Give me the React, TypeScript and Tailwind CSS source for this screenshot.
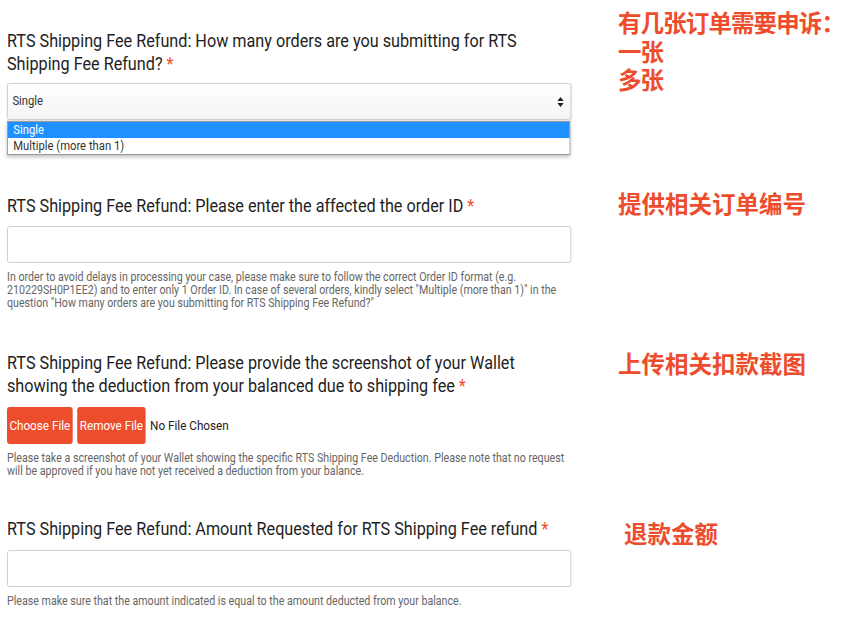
import React from "react";

function Star() {
  return <span className="text-[#ee4d2d]"> *</span>;
}

function Heading({ children, top }: { children: React.ReactNode; top: string }) {
  return (
    <div className={`${top} text-[18px] leading-[23px] text-[#1e1e1e]`}>
      {children}
      <Star />
    </div>
  );
}

function Help({ children, top }: { children: React.ReactNode; top: string }) {
  return <div className={`${top} text-[11.85px] leading-[13px] text-[#666]`}>{children}</div>;
}

function Note({ children, className }: { children: React.ReactNode; className: string }) {
  return (
    <div
      className={`${className} whitespace-nowrap text-[23.5px] leading-[28.5px] font-semibold text-[#ee4d2d] font-['Noto_Sans_CJK_SC',sans-serif]`}
    >
      {children}
    </div>
  );
}

export default function App() {
  return (
    <div className="w-[850px] h-[621px] overflow-hidden bg-white flex font-['Roboto',sans-serif]">
      {/* form, drawn in a narrow (condensed) face */}
      <div className="w-[618px] shrink-0 pl-[7px]">
        <div className="w-[627px] origin-left scale-x-[0.9]">
          <Heading top="pt-[29px]">
            RTS Shipping Fee Refund: How many orders are you submitting for RTS Shipping Fee Refund?
          </Heading>

          <div className="relative mt-[8px]">
            <div className="h-[37px] border border-[#ccc] rounded-[3px] bg-gradient-to-b from-white to-[#f4f4f4] shadow-[0_1px_2px_rgba(0,0,0,0.12)] flex items-center justify-between pl-[5px] pr-[7px]">
              <span className="text-[12.5px] text-[#333]">Single</span>
              <svg width="8" height="12" viewBox="0 0 8 12">
                <path d="M4 1 L7.5 5 L0.5 5 Z" fill="#222" />
                <path d="M4 11 L7.5 7 L0.5 7 Z" fill="#222" />
              </svg>
            </div>
            <div className="absolute left-0 right-[1px] top-[38px] bg-white border border-[#9a9a9a] shadow-[0_2px_4px_rgba(0,0,0,0.25)] text-[12.5px] leading-[16px]">
              <div className="bg-[#1e90ff] text-white pl-[6px]">Single</div>
              <div className="text-[#333] pl-[6px]">Multiple (more than 1)</div>
            </div>
          </div>

          <Heading top="mt-[74px]">RTS Shipping Fee Refund: Please enter the affected the order ID</Heading>
          <div className="mt-[9px] h-[37px] border border-[#ccc] rounded-[3px] bg-white" />
          <Help top="mt-[8px]">
            In order to avoid delays in processing your case, please make sure to follow the correct Order ID format (e.g.
            210229SH0P1EE2) and to enter only 1 Order ID. In case of several orders, kindly select "Multiple (more than 1)" in
            the question "How many orders are you submitting for RTS Shipping Fee Refund?"
          </Help>

          <Heading top="mt-[41px]">
            RTS Shipping Fee Refund: Please provide the screenshot of your Wallet showing the deduction from your balanced due
            to shipping fee
          </Heading>
          <div className="mt-[10px] flex items-center gap-[5px]">
            <button className="h-[37px] w-[73px] bg-[#ee4d2d] rounded-[3px] text-white text-[13px]">Choose File</button>
            <button className="h-[37px] w-[76px] bg-[#ee4d2d] rounded-[3px] text-white text-[13px]">Remove File</button>
            <span className="text-[13px] text-[#222]">No File Chosen</span>
          </div>
          <Help top="mt-[8px]">
            Please take a screenshot of your Wallet showing the specific RTS Shipping Fee Deduction. Please note that no request
            will be approved if you have not yet received a deduction from your balance.
          </Help>

          <Heading top="mt-[39px]">RTS Shipping Fee Refund: Amount Requested for RTS Shipping Fee refund</Heading>
          <div className="mt-[10px] h-[37px] border border-[#ccc] rounded-[3px] bg-white" />
          <Help top="mt-[8px]">
            Please make sure that the amount indicated is equal to the amount deducted from your balance.
          </Help>
        </div>
      </div>

      {/* annotations */}
      <div className="flex-1 flex flex-col items-start">
        <Note className="mt-[8px] tracking-[-0.9px]">
          有几张订单需要申诉：
          <br />
          一张
          <br />
          多张
        </Note>
        <Note className="mt-[95px]">提供相关订单编号</Note>
        <Note className="mt-[132px]">上传相关扣款截图</Note>
        <Note className="mt-[141px] ml-[6px]">退款金额</Note>
      </div>
    </div>
  );
}
